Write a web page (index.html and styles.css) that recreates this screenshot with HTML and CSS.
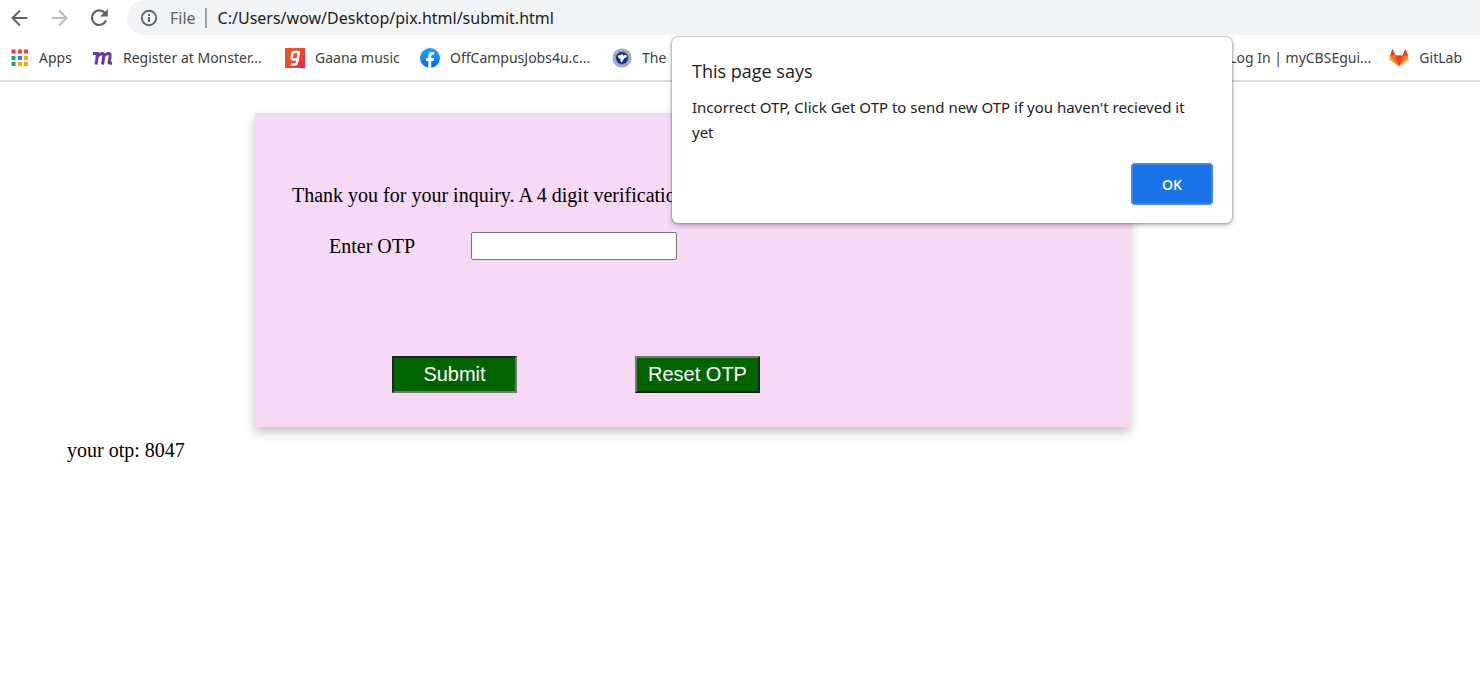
FILE: index.html
```html
<!DOCTYPE html>
<html lang="en">
<head>
<meta charset="utf-8">
<title>Submit</title>
<link rel="stylesheet" href="styles.css">
</head>
<body>
<header class="browser">
  <div class="toolbar">
    <button class="nav-button" type="button" aria-label="Back">
      <svg width="20" height="20" viewBox="0 0 20 20" fill="none" stroke="#5f6368" stroke-width="2"><path d="M18.500 10H3.500M11 2.500L3.500 10l7.500 7.500"/></svg>
    </button>
    <button class="nav-button" type="button" aria-label="Forward">
      <svg width="20" height="20" viewBox="0 0 20 20" fill="none" stroke="#babcbe" stroke-width="2"><path d="M2.500 10h15M10 2.500L17.500 10l-7.500 7.500"/></svg>
    </button>
    <button class="nav-button" type="button" aria-label="Reload">
      <svg width="20" height="20" viewBox="0 0 20 20"><path d="M15.800 5A7.300 7.300 0 1 0 17 12.300" fill="none" stroke="#5f6368" stroke-width="2.200"/><path d="M18.800 1v7.600h-7.600z" fill="#5f6368"/></svg>
    </button>
    <div class="address">
      <svg width="18" height="18" viewBox="0 0 18 18"><circle cx="9" cy="9" r="7.200" fill="none" stroke="#5f6368" stroke-width="1.900"/><path d="M8 8h2v5H8zM8 5h2v2H8z" fill="#5f6368"/></svg>
      <span class="scheme">File</span>
      <span class="url">C:/Users/wow/Desktop/pix.html/submit.html</span>
    </div>
  </div>
  <nav class="bookmarks" aria-label="Bookmarks">
    <a class="bookmark apps" href="#">
      <svg width="18" height="18" viewBox="0 0 18 18"><path d="M.5.500h4v4h-4zM7 .5h4v4H7zM13 .5h4v4h-4z" fill="#f23d37"/><path d="M.5 7h4v4h-4zM.5 13h4v4h-4z" fill="#26a653"/><path d="M7 7h4v4H7z" fill="#1a8cf5"/><path d="M7 13h4v4H7zM13 7h4v4h-4zM13 13h4v4h-4z" fill="#f9ab0b"/></svg>
      <span>Apps</span>
    </a>
    <a class="bookmark long" href="#">
      <svg width="20" height="20" viewBox="0 0 20 20" fill="none" stroke="#6b399c" stroke-width="3"><path d="M0 5.500h4.300q-.2 6-1.300 11M4 8.500q5-4 6.500-2.500Q11 9 9.500 16.500M10.500 8.500q4-4 6.500-2.500Q17.500 9 16 14.500q0 1 3 .5"/></svg>
      <span>Register at Monster...</span>
    </a>
    <a class="bookmark short" href="#">
      <svg width="20" height="20" viewBox="0 0 20 20"><defs><linearGradient id="gaana" x1="0" y1="0" x2="1" y2="1"><stop offset=".4" stop-color="#ef5023"/><stop offset="1" stop-color="#ec2055"/></linearGradient></defs><path d="M0 0h20v20H0z" fill="url(#gaana)"/><path d="M13.700 4H9.600Q7.600 4 7.200 6l-.5 3.200q-.3 2.300 1.600 2.300h3.500M14 3l-1.800 11q-.4 2.500-2.700 2.500H5.800" fill="none" stroke="#fff" stroke-width="2.500"/></svg>
      <span>Gaana music</span>
    </a>
    <a class="bookmark long" href="#">
      <svg width="20" height="20" viewBox="0 0 20 20"><defs><linearGradient id="facebook" x1="0" y1="0" x2="0" y2="1"><stop stop-color="#18acfe"/><stop offset="1" stop-color="#0866e8"/></linearGradient></defs><circle cx="10" cy="10" r="10" fill="url(#facebook)"/><path d="M8.300 20v-7H6v-3h2.300V8c0-2.600 1.400-4 3.800-4l2 .2v2.500h-1.300c-1.200 0-1.600.7-1.600 1.500V10H14l-.5 3h-2.300v7z" fill="#fff"/></svg>
      <span>OffCampusJobs4u.c...</span>
    </a>
    <a class="bookmark" href="#">
      <svg width="20" height="20" viewBox="0 0 20 20"><circle cx="10" cy="10" r="9.500" fill="#8d9cbd"/><circle cx="10" cy="10" r="8" fill="none" stroke="#c1cada" stroke-width="1.500" stroke-dasharray="1 1"/><circle cx="10" cy="10" r="6" fill="#102f79"/><path d="M6 7.500l3-.5 1-1.500 1 2 3-.5 1 2-3 1.500-2 4-1.500-1V11l-2-1z" fill="#fff"/></svg>
      <span>The</span>
    </a>
    <a class="bookmark login" href="#"><span>Log In | myCBSEgui...</span></a>
    <a class="bookmark" href="#">
      <svg width="20" height="20" viewBox="0 0 20 20"><path d="M10 18.500L0 11.200 3.500.8 6.500 7h7l3-6.200L20 11.200z" fill="#fca326"/><path d="M10 18.500L1 7.800h5.500zM10 18.500l9-10.700h-5.500z" fill="#fc6d26"/><path d="M10 18.500L6 7.800h8zM3.500.8L1 7.800h5.500zM16.500.8L13.500 7.800H19z" fill="#e24329"/></svg>
      <span>GitLab</span>
    </a>
  </nav>
</header>

<main class="page">
  <form class="card">
    <p class="message">Thank you for your inquiry. A 4 digit verificatio</p>
    <div class="field">
      <label for="otp">Enter OTP</label>
      <input class="otp" id="otp" type="text">
    </div>
    <div class="actions">
      <button class="action pressed" type="button">Submit</button>
      <button class="action" type="button">Reset OTP</button>
    </div>
  </form>
  <p class="result">your otp: 8047</p>
</main>

<dialog class="alert" open aria-labelledby="alert-title">
  <h1 class="alert-title" id="alert-title">This page says</h1>
  <p class="alert-text">Incorrect OTP, Click Get OTP to send new OTP if you haven't recieved it yet</p>
  <button class="ok" type="button">OK</button>
</dialog>
</body>
</html>
```
FILE: styles.css
```css
* {
  box-sizing: border-box;
}

body {
  margin: 0;
  background: #fff;
  color: #000;
  font: 20px/24px "Liberation Serif", "Times New Roman", serif;
}

p,
h1 {
  margin: 0;
}

.browser {
  border-bottom: 2px solid #dadce0;
  font-family: "Segoe UI", "Noto Sans", sans-serif;
}

.toolbar {
  display: flex;
  height: 35px;
  padding-left: 9px;
}

.nav-button {
  display: flex;
  align-items: center;
  width: 40px;
  padding: 0;
  border: 0;
  background: none;
}

.address {
  display: flex;
  flex: 1;
  align-items: center;
  margin-left: -2px;
  padding-left: 13px;
  border-radius: 18px 0 0 18px;
  background: #f1f3f4;
  font-size: 16px;
}

.scheme {
  margin-left: 12px;
  padding-right: 9px;
  border-right: 2px solid #9aa0a6;
  color: #5f6368;
  line-height: 20px;
}

.url {
  margin-left: 11px;
  color: #202124;
}

.bookmarks {
  display: flex;
  height: 45px;
  padding: 0 18px 0 11px;
  font-size: 14px;
}

.bookmark {
  display: flex;
  flex: none;
  align-items: center;
  gap: 10px;
  color: #3c4043;
  text-decoration: none;
  white-space: nowrap;
}

.apps {
  width: 82px;
}

.long {
  width: 192px;
}

.short {
  width: 135px;
}

.login {
  margin-right: 18px;
  margin-left: auto;
}

.page {
  padding-top: 31px;
}

.card {
  margin: 0 350px 0 255px;
  padding: 70px 37px 34px;
  background: #f5d9f5;
  box-shadow: 0 5px 10px rgba(0, 0, 0, 0.25);
}

.message {
  white-space: nowrap;
}

.field {
  display: flex;
  align-items: center;
  gap: 56px;
  margin-top: 25px;
  padding-left: 37px;
}

.otp {
  width: 206px;
  height: 28px;
  border: 1px solid #767676;
  border-radius: 2px;
  background: #fff;
  font: 16px "Liberation Sans", Arial, sans-serif;
}

.actions {
  display: flex;
  gap: 118px;
  margin-top: 96px;
  padding-left: 100px;
}

.action {
  width: 125px;
  height: 37px;
  padding: 0;
  border: 2px solid;
  border-color: #767676 #212121 #212121 #767676;
  background: #006400;
  color: #fff;
  font: 20px "Liberation Sans", Arial, sans-serif;
}

.pressed {
  border-color: #212121 #767676 #767676 #212121;
}

.result {
  margin: 11px 0 0 67px;
}

.alert {
  position: absolute;
  top: 37px;
  right: 248px;
  left: auto;
  display: flex;
  flex-direction: column;
  width: 560px;
  margin: 0;
  padding: 22px 19px 18px 20px;
  border: 0;
  border-radius: 6px;
  background: #fff;
  box-shadow: 0 0 2px rgba(0, 0, 0, 0.5), 0 2px 5px rgba(0, 0, 0, 0.3);
  color: #202124;
  font-family: "Segoe UI", "Open Sans", sans-serif;
}

.alert-title {
  font-size: 18px;
  font-weight: 400;
  line-height: 24px;
}

.alert-text {
  margin-top: 12px;
  padding-right: 10px;
  font-family: "Segoe UI", "Noto Sans", sans-serif;
  font-size: 15px;
  line-height: 25px;
}

.ok {
  align-self: flex-end;
  width: 82px;
  height: 42px;
  margin-top: 18px;
  border: 2px solid #4285f4;
  border-radius: 4px;
  background: #1a73e8;
  color: #fff;
  font: 600 14px "Segoe UI", "Open Sans", sans-serif;
}
```
